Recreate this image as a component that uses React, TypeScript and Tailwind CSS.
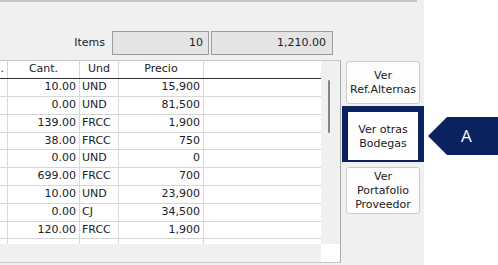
const rows: [string, string, string][] = [
  ['10.00', 'UND', '15,900'],
  ['0.00', 'UND', '81,500'],
  ['139.00', 'FRCC', '1,900'],
  ['38.00', 'FRCC', '750'],
  ['0.00', 'UND', '0'],
  ['699.00', 'FRCC', '700'],
  ['10.00', 'UND', '23,900'],
  ['0.00', 'CJ', '34,500'],
  ['120.00', 'FRCC', '1,900'],
]

// rows 4 and 9 are one pixel shorter in the capture
const shortRows = [3, 8]

function GridButton({ lines, className }: { lines: string[]; className: string }) {
  return (
    <div
      className={`flex flex-col items-center justify-center rounded-[3px] border border-[#cdcdcd] bg-[#fdfdfd] leading-[14px] ${className}`}
    >
      {lines.map((l) => (
        <span key={l}>{l}</span>
      ))}
    </div>
  )
}

export default function App() {
  return (
    <div
      className="relative flex h-[265px] w-[498px] overflow-hidden bg-white text-[11px] text-[#202028]"
      style={{ fontFamily: '"DejaVu Sans", sans-serif' }}
    >
      <div className="flex h-full w-[424px] flex-col bg-[#f0f0f0]">
        <div className="h-[2px] w-[417px] bg-[#c4c4ca]" />

        <div className="mt-[29px] flex h-[24px] w-[333px] items-center justify-end">
          <span className="mr-[7px]">Items</span>
          <div className="flex h-full w-[97px] items-center justify-end border border-[#9c9c9c] bg-[#e4e4e4] pr-[5px]">
            10
          </div>
          <div className="ml-[2px] flex h-full w-[122px] items-center justify-end border border-[#9c9c9c] bg-[#e4e4e4] pr-[6px]">
            1,210.00
          </div>
        </div>

        <div className="mt-[5px] flex">
          {/* grid */}
          <div className="flex h-[203px] w-[341px] border-y border-r border-y-[#c8c8c8] border-r-[#a8a8a8]">
            <div className="flex w-[321px] flex-col bg-white">
              <div className="flex h-[18px] shrink-0 border-b border-[#303030]">
                <div className="flex w-[8px] items-center justify-end border-r border-[#d8d8d8] pr-[3px]">.</div>
                <div className="flex w-[72px] items-center justify-center border-r border-[#d8d8d8]">Cant.</div>
                <div className="flex w-[39px] items-center justify-center border-r border-[#d8d8d8]">Und</div>
                <div className="flex w-[85px] items-center justify-center border-r border-[#d8d8d8]">Precio</div>
                <div className="flex-1" />
              </div>
              {rows.map((r, i) => (
                <div
                  key={i}
                  className={`flex shrink-0 border-b border-[#d6d6d6] ${shortRows.includes(i) ? 'h-[17px]' : 'h-[18px]'}`}
                >
                  <div className="w-[8px] border-r border-[#d8d8d8]" />
                  <div className="flex w-[72px] items-center justify-end border-r border-[#d8d8d8] pr-[3px]">{r[0]}</div>
                  <div className="flex w-[39px] items-center border-r border-[#d8d8d8] pl-[2px]">{r[1]}</div>
                  <div className="flex w-[85px] items-center justify-end border-r border-[#d8d8d8] pr-[3px]">{r[2]}</div>
                  <div className="flex-1" />
                </div>
              ))}
              <div className="flex h-[5px] shrink-0">
                <div className="w-[8px] border-r border-[#d8d8d8]" />
                <div className="w-[72px] border-r border-[#d8d8d8]" />
                <div className="w-[39px] border-r border-[#d8d8d8]" />
                <div className="w-[85px] border-r border-[#d8d8d8]" />
              </div>
              <div className="h-[18px] shrink-0 bg-[#f0f0f0]" />
            </div>
            <div className="flex w-[19px] flex-col">
              <div className="flex-1 bg-[#f0f0f0]">
                <div className="ml-[7px] mt-[19px] h-[53px] w-[2px] rounded-full bg-[#858585]" />
              </div>
              <div className="h-[18px] bg-white" />
            </div>
          </div>

          {/* buttons */}
          <div className="ml-[5px] flex w-[74px] flex-col pt-[1px]">
            <GridButton lines={['Ver', 'Ref.Alternas']} className="h-[43px]" />
            <div className="-mx-[4px] mt-[2px] flex h-[56px] flex-col items-center justify-center border-x-[6px] border-b-[2px] border-t-[6px] border-[#0b2261] bg-white pt-[2px] leading-[14px]">
              <span>Ver otras</span>
              <span>Bodegas</span>
            </div>
            <GridButton lines={['Ver', 'Portafolio', 'Proveedor']} className="mt-[5px] h-[47px]" />
          </div>
        </div>
      </div>

      {/* callout */}
      <div
        className="absolute left-[428px] top-[117px] flex h-[38px] w-[70px] items-center bg-[#0b2261] pl-[33px] text-[17px] text-white"
        style={{ clipPath: 'polygon(0 50%, 19px 0, 100% 0, 100% 100%, 19px 100%)', fontFamily: '"Open Sans", sans-serif' }}
      >
        A
      </div>
    </div>
  )
}
